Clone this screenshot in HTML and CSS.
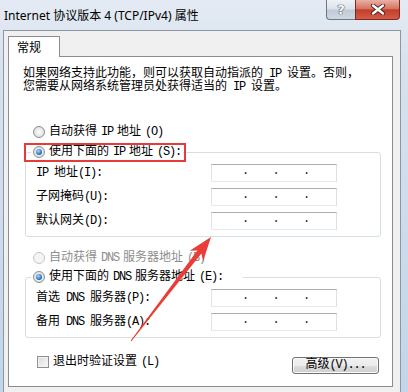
FILE: index.html
```html
<!DOCTYPE html>
<html lang="zh-CN">
<head>
    <meta charset="UTF-8">
    <title>Internet 协议版本 4 (TCP/IPv4) 属性</title>
    <link rel="stylesheet" href="styles.css">
</head>
<body>
    <div class="window">
        <div class="titlebar">
            <span class="title">Internet 协议版本 4 (TCP/IPv4) 属性</span>
            <div class="caption-btns">
                <span class="cap-btn help">?</span>
                <span class="cap-btn close">
                    <svg width="16" height="11" viewBox="0 0 16 11">
                        <path d="M3 1.5 L13 9.5 M13 1.5 L3 9.5" stroke="#4a1d17" stroke-width="4.2" stroke-linecap="round"/>
                        <path d="M3 1.5 L13 9.5 M13 1.5 L3 9.5" stroke="#fff" stroke-width="2.4" stroke-linecap="round"/>
                    </svg>
                </span>
            </div>
        </div>

        <div class="client">
            <div class="tabs"><span class="tab">常规</span></div>

            <div class="panel">
                <p class="intro">如果网络支持此功能，则可以获取自动指派的<span class="en"> IP </span>设置。否则，<br>您需要从网络系统管理员处获得适当的<span class="en"> IP </span>设置。</p>

                <div class="radio first"><span class="mark"></span>自动获得<span class="en"> IP </span>地址<span class="en">(O)</span></div>

                <fieldset class="group">
                    <legend class="hl"><span class="radio"><span class="mark checked"></span>使用下面的<span class="en"> IP </span>地址<span class="en">(S):</span></span></legend>
                    <div class="row">
                        <span class="label"><span class="en">IP </span>地址<span class="en">(I):</span></span>
                        <div class="ipbox"><span></span><i>.</i><span></span><i>.</i><span></span><i>.</i><span></span></div>
                    </div>
                    <div class="row">
                        <span class="label">子网掩码<span class="en">(U):</span></span>
                        <div class="ipbox"><span></span><i>.</i><span></span><i>.</i><span></span><i>.</i><span></span></div>
                    </div>
                    <div class="row">
                        <span class="label">默认网关<span class="en">(D):</span></span>
                        <div class="ipbox"><span></span><i>.</i><span></span><i>.</i><span></span><i>.</i><span></span></div>
                    </div>
                </fieldset>

                <div class="radio disabled"><span class="mark"></span>自动获得<span class="en"> DNS </span>服务器地址<span class="en">(B)</span></div>

                <fieldset class="group dns">
                    <legend><span class="radio"><span class="mark checked"></span>使用下面的<span class="en"> DNS </span>服务器地址<span class="en">(E):</span></span></legend>
                    <div class="row">
                        <span class="label">首选<span class="en"> DNS </span>服务器<span class="en">(P):</span></span>
                        <div class="ipbox"><span></span><i>.</i><span></span><i>.</i><span></span><i>.</i><span></span></div>
                    </div>
                    <div class="row">
                        <span class="label">备用<span class="en"> DNS </span>服务器<span class="en">(A):</span></span>
                        <div class="ipbox"><span></span><i>.</i><span></span><i>.</i><span></span><i>.</i><span></span></div>
                    </div>
                </fieldset>

                <div class="footer">
                    <label class="check"><span class="box"></span>退出时验证设置<span class="en">(L)</span></label>
                    <button class="btn">高级<span class="en">(V)...</span></button>
                </div>
            </div>
        </div>

        <!-- 注釈の矢印 -->
        <svg class="arrow" width="408" height="392" viewBox="0 0 408 392">
            <polygon points="130.6,340.7 197.4,250.6 189.7,250.8 211,237 203.1,261.2 201.4,253.6 131.4,341.3" fill="#ea3d3a"/>
        </svg>
    </div>
</body>
</html>
```

FILE: styles.css
```css
* {
    margin: 0;
    padding: 0;
    box-sizing: border-box;
}

body {
    width: 408px;
    height: 392px;
    overflow: hidden;
    font-family: "Liberation Mono", "Noto Sans CJK SC", monospace;
    font-size: 12px;
    color: #000;
}

.en {
    letter-spacing: -1.2px;
}

.window {
    position: relative;
    height: 392px;
    background: linear-gradient(to bottom, #e4ebf4 0, #d8e2ee 60px, #c2d5ea 392px);
}

/* title bar */
.titlebar {
    display: flex;
    height: 30px;
}

.title {
    font-family: "Noto Sans", "Noto Sans CJK SC", sans-serif;
    font-size: 12px;
    line-height: 14px;
    padding: 9px 0 0 4px;
}

.caption-btns {
    display: flex;
    height: 20px;
    margin: 0 8px 0 auto;
}

.cap-btn {
    display: flex;
    align-items: center;
    justify-content: center;
    height: 20px;
    border: 1px solid #6b7788;
    border-top: none;
}

.help {
    width: 29px;
    border-right: none;
    border-radius: 0 0 0 4px;
    background: linear-gradient(#eef2f7, #dbe2ea 48%, #bfcad7 52%, #cfd8e2);
    color: #fff;
    font: bold 13px "DejaVu Sans", sans-serif;
    text-shadow: 0 0 1px #3d4651, 0 0 1px #3d4651, 0 0 1px #3d4651;
}

.close {
    width: 45px;
    border-color: #7b2a20;
    border-radius: 0 0 4px 0;
    background: linear-gradient(#eab0a4, #d77563 45%, #c33e2c 52%, #d45b45);
}

/* client area */
.client {
    height: 362px;
    margin: 0 7px 0 3px;
    padding: 5px 7px 0 4px;
    background-color: #f0f0f0;
    border: 1px solid #8e969f;
    border-bottom: none;
}

.tabs {
    display: flex;
}

.tab {
    position: relative;
    z-index: 1;
    height: 21px;
    margin-bottom: -1px;
    padding: 3px 18px 0 8px;
    background-color: #fff;
    border: 1px solid #898c95;
    border-bottom: none;
    font-family: "Noto Sans CJK SC", sans-serif;
    line-height: 14px;
}

.panel {
    background-color: #fff;
    border: 1px solid #898c95;
    padding-bottom: 12px;
}

.intro {
    margin: 11px 0 0 14px;
    line-height: 13px;
    white-space: nowrap;
}

.radio {
    display: flex;
    align-items: center;
    gap: 4px;
    height: 16px;
    line-height: 16px;
    white-space: nowrap;
}

.radio.first {
    margin: 30px 0 0 24px;
}

.radio.disabled {
    margin: 13px 0 0 24px;
    color: #8d8d8d;
}

.mark {
    display: flex;
    align-items: center;
    justify-content: center;
    width: 12px;
    height: 12px;
    border: 1px solid #8c8f93;
    border-radius: 50%;
    background: radial-gradient(circle, #fdfdfd 0, #e8e8e8 55%, #cdcdcd 100%);
}

.mark.checked::after {
    content: "";
    width: 6px;
    height: 6px;
    border-radius: 50%;
    background: radial-gradient(circle at 40% 35%, #a8dcff, #2b74c4 60%, #0c3c78);
}

.disabled .mark {
    border-color: #c6c6c6;
    background: #f4f4f4;
}

/* group boxes */
.group {
    min-width: 0;
    margin: 4px 11px 0 16px;
    padding: 4px 0 6px;
    border: 1px solid #d5dfe5;
    border-radius: 3px;
}

.group.dns {
    margin-top: 3px;
}

.group legend {
    margin-left: 5px;
    padding: 0 2px;
}

.group.dns legend {
    padding-right: 20px;
}

.hl {
    position: relative;
}

.hl::after {
    content: "";
    position: absolute;
    left: -7px;
    right: -3px;
    top: -1px;
    bottom: -2px;
    border: 2px solid #e63b3b;
}

.row {
    display: grid;
    grid-template-columns: 175px 126px;
    align-items: center;
    height: 18px;
    padding-left: 10px;
    line-height: 18px;
    white-space: nowrap;
}

.row + .row {
    margin-top: 6px;
}

.ipbox {
    display: flex;
    height: 18px;
    padding-left: 4px;
    border: 1px solid;
    border-color: #abadb3 #dbdfe6 #e3e9ef #e2e3ea;
}

.ipbox span {
    flex: 1;
}

.ipbox i {
    display: flex;
    justify-content: center;
    width: 2px;
    font-style: normal;
    line-height: 13px;
    color: #222;
}

/* footer */
.footer {
    display: flex;
    justify-content: space-between;
    align-items: flex-start;
    margin: 16px 13px 0 28px;
}

.check {
    display: flex;
    align-items: center;
    gap: 4px;
    height: 16px;
    line-height: 16px;
}

.box {
    width: 12px;
    height: 12px;
    border: 1px solid #8c8f93;
    background: linear-gradient(135deg, #d9d9d9, #fbfbfb);
    box-shadow: inset 0 0 0 1px #f2f2f2;
}

.btn {
    width: 87px;
    height: 17px;
    margin-top: 3px;
    font: inherit;
    line-height: 15px;
    color: #000;
    border: 1px solid #707070;
    border-radius: 3px;
    background: linear-gradient(#f2f2f2 0, #ebebeb 50%, #dddddd 51%, #cfcfcf 100%);
    box-shadow: inset 0 0 0 1px #fbfbfb;
}

.arrow {
    position: absolute;
    left: 0;
    top: 0;
    pointer-events: none;
}
```
